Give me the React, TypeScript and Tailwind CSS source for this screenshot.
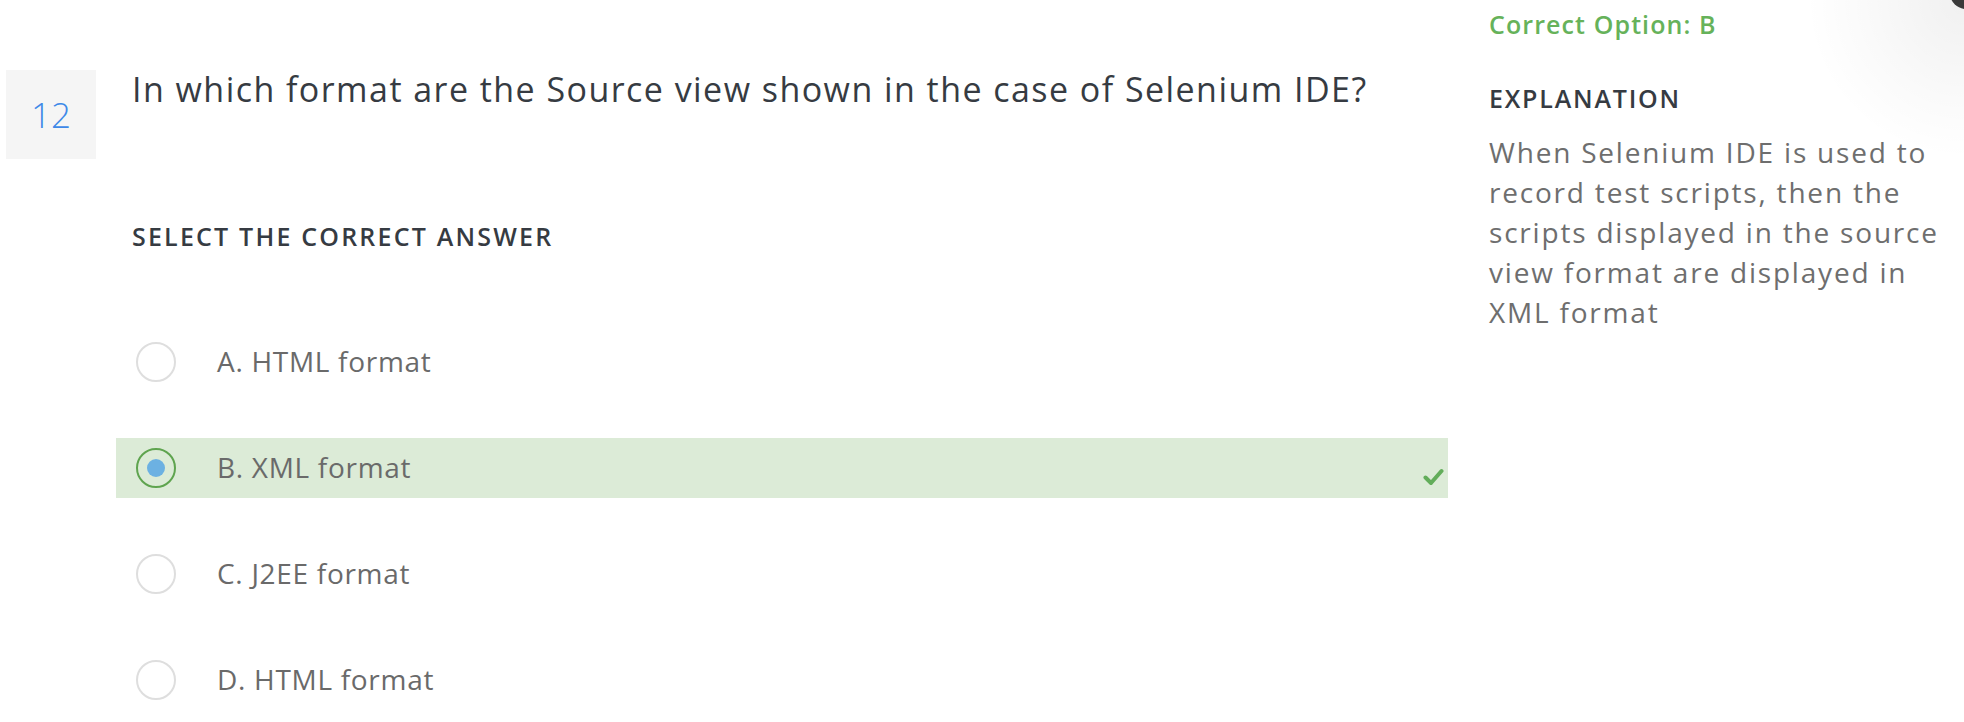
import { Fragment } from 'react';

const options = [
  { key: 'A', text: 'HTML format' },
  { key: 'B', text: 'XML format' },
  { key: 'C', text: 'J2EE format' },
  { key: 'D', text: 'HTML format' },
];

const correct = 'B';
const chosen = 'B';

const Check = () => (
  <svg width="21" height="18" viewBox="0 0 21 18" aria-hidden="true">
    <path
      d="M2.5 9.5 L8 15 L18.5 3"
      fill="none"
      stroke="#62ad5a"
      strokeWidth="4"
      strokeLinecap="round"
      strokeLinejoin="round"
    />
  </svg>
);

const Radio = ({ selected }: { selected: boolean }) =>
  selected ? (
    <span className="flex h-[40px] w-[40px] shrink-0 items-center justify-center rounded-full border-2 border-[#5fa44f]">
      <span className="h-[18px] w-[18px] rounded-full bg-[#6cb1e2]" />
    </span>
  ) : (
    <span className="h-[40px] w-[40px] shrink-0 rounded-full border-2 border-[#dedede] bg-white" />
  );

export default function App() {
  return (
    <div className="relative h-[722px] w-full overflow-hidden bg-white font-['Open_Sans','Liberation_Sans',sans-serif]">
      {/* faint corner shadow + dark blob peeking in at top right */}
      <div className="absolute right-[-160px] top-[-160px] h-[320px] w-[320px] rounded-full bg-[radial-gradient(circle,rgba(0,0,0,0.06)_0%,rgba(0,0,0,0.02)_45%,rgba(0,0,0,0)_70%)]" />
      <div className="absolute left-[1950px] top-[-23px] h-[32px] w-[32px] rounded-full bg-[#3a3a3a]" />

      <div className="flex">
        {/* question number */}
        <div className="pl-[6px] pt-[70px]">
          <div className="flex h-[89px] w-[90px] items-center justify-center bg-[#f5f5f5] text-[35px] leading-none font-light text-[#3e89e8]">
            12
          </div>
        </div>

        {/* question + answers */}
        <div className="ml-[20px] w-[1332px]">
          <h2 className="pl-[16px] pt-[69px] text-[34px] leading-[1.2] font-normal tracking-[1.45px] text-[#363b42]">
            In which format are the Source view shown in the case of Selenium IDE?
          </h2>

          <p className="mt-[111px] pl-[16px] text-[25px] leading-[1.2] font-semibold tracking-[2.2px] text-[#363b42]">
            SELECT THE CORRECT ANSWER
          </p>

          <div className="mt-[81px] flex flex-col gap-[46px]">
            {options.map(o => {
              const isCorrect = o.key === correct;
              const isChosen = o.key === chosen;
              return (
                <Fragment key={o.key}>
                  <div
                    className={
                      isCorrect
                        ? 'flex h-[60px] items-center bg-[#dcebd7] pl-[20px] pr-[4px]'
                        : 'flex h-[60px] items-center pl-[20px] pr-[4px]'
                    }
                  >
                    <Radio selected={isChosen} />
                    <span className="ml-[41px] text-[28px] leading-[1.2] tracking-[0.7px] text-[#6a6a6a]">
                      {o.key}. {o.text}
                    </span>
                    {isCorrect && (
                      <span className="mb-[12px] ml-auto self-end">
                        <Check />
                      </span>
                    )}
                  </div>
                </Fragment>
              );
            })}
          </div>
        </div>

        {/* explanation side */}
        <div className="ml-[41px] w-[470px] pt-[9px]">
          <p className="text-[25px] leading-[1.2] font-semibold tracking-[1.1px] text-[#66b25a]">
            Correct Option: B
          </p>
          <p className="mt-[44px] text-[25px] leading-[1.2] font-semibold tracking-[1.8px] text-[#363b42]">
            EXPLANATION
          </p>
          <p className="mt-[19px] text-[28px] leading-[40px] tracking-[1.8px] text-[#6e6e6e]">
            When Selenium IDE is used to record test scripts, then the scripts
            displayed in the source view format are displayed in XML format
          </p>
        </div>
      </div>
    </div>
  );
}
